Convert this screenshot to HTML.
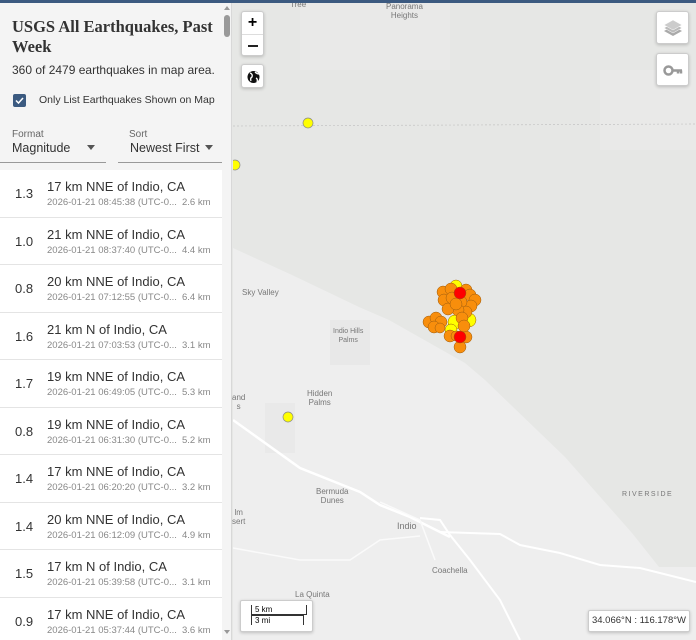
<!DOCTYPE html>
<html><head><style>
*{margin:0;padding:0;box-sizing:border-box}
body{width:696px;height:640px;overflow:hidden;font-family:"Liberation Sans",sans-serif;position:relative;background:#e6e7e5}
#top{position:absolute;left:0;top:0;width:696px;height:3px;background:#3c5a80;z-index:5}
#panel{position:absolute;left:0;top:0;width:232px;height:640px;background:#fff;border-right:1px solid #d8d8d8;overflow:hidden}
#hdr{position:absolute;left:0;top:0;width:222px;height:170px;background:#f4f4f4}
h1{position:absolute;left:12px;top:17px;font-family:"Liberation Serif",serif;font-size:16.5px;line-height:20px;color:#333;font-weight:bold;white-space:nowrap}
.cnt{position:absolute;left:12px;top:63px;font-size:12px;color:#333;white-space:nowrap}
.cb{position:absolute;left:13px;top:94px;width:13px;height:13px;background:#3b5a80;border-radius:2px}
.cbl{position:absolute;left:39px;top:94px;font-size:10.5px;color:#333;white-space:nowrap}
.lab{position:absolute;font-size:10px;color:#666;top:129px}
.sel{position:absolute;top:141px;font-size:12.5px;color:#333;height:22px;border-bottom:1px solid #999;white-space:nowrap}
.arr{position:absolute;top:145px;width:0;height:0;border-left:4px solid transparent;border-right:4px solid transparent;border-top:5px solid #555}
.row{position:absolute;left:0;width:222px;height:47.5px;border-bottom:1px solid #e4e4e4;background:#fff}
.mag{position:absolute;left:15px;top:16px;font-size:13px;color:#333}
.pl{position:absolute;left:47px;top:9px;font-size:13px;color:#333;white-space:nowrap}
.tm{position:absolute;left:47px;top:27px;font-size:9.5px;color:#888;white-space:nowrap}
.km{position:absolute;left:182px;top:27px;font-size:9.5px;color:#888}
#sb{position:absolute;left:222px;top:0;width:10px;height:640px;background:#f4f4f4}
#map{position:absolute;left:233px;top:0;width:463px;height:640px}
.btn{position:absolute;background:#fff;border:1px solid #ccc;border-radius:3px;box-shadow:0 1px 3px rgba(0,0,0,.2)}
.t{position:absolute;font-size:8px;color:#777;text-align:center;line-height:9px}
</style></head><body>
<div id="top"></div>
<svg id="map" width="463" height="640" viewBox="233 0 463 640">
<rect x="233" y="0" width="463" height="640" fill="#e6e7e5"/>
<polygon points="233,248 292,275 359,307 389,320 465,363 485,380 565,457 632,533 659,567 696,567 696,640 233,640" fill="#eeeeee"/>
<rect x="300" y="0" width="150" height="70" fill="#e9e9e8"/>
<rect x="600" y="70" width="96" height="80" fill="#e9e9e8"/>
<rect x="330" y="320" width="40" height="45" fill="#e8e8e8"/>
<rect x="265" y="403" width="30" height="50" fill="#e9e9e9"/>
<line x1="233" y1="126" x2="696" y2="124" stroke="#c4c4c4" stroke-width="0.7" stroke-dasharray="2,2"/>
<polyline points="233,420 300,468 360,492 380,505 410,517 420,522 450,537" fill="none" stroke="#fff" stroke-width="2.5"/>
<polyline points="380,502 420,520 435,560" fill="none" stroke="#fafafa" stroke-width="1.5"/>
<polyline points="420,518 440,520 450,535 470,560 500,600 520,640" fill="none" stroke="#fff" stroke-width="2"/>
<polyline points="440,532 500,534 520,545 560,553 600,565 640,568 696,582" fill="none" stroke="#fff" stroke-width="2"/>
<polyline points="233,548 300,560 350,560 380,540 420,536" fill="none" stroke="#fafafa" stroke-width="1.5"/>
<circle cx="308" cy="123" r="5" fill="#ff0" stroke="#888" stroke-width=".7"/>
<circle cx="235" cy="165" r="5" fill="#ff0" stroke="#888" stroke-width=".7"/>
<circle cx="288" cy="417" r="5" fill="#ff0" stroke="#888" stroke-width=".7"/>
<g stroke="#995a10" stroke-width=".5">
<circle cx="456" cy="286" r="6" fill="#ff0"/><circle cx="469" cy="320" r="7" fill="#ff0"/><circle cx="455" cy="322" r="7" fill="#ff0"/><circle cx="451" cy="330" r="6" fill="#ff0"/>
<circle cx="443" cy="292" r="6" fill="#f88e0c"/><circle cx="444" cy="300" r="6" fill="#f88e0c"/><circle cx="451" cy="289" r="6" fill="#f88e0c"/><circle cx="466" cy="290" r="6" fill="#f88e0c"/><circle cx="470" cy="295" r="6" fill="#f88e0c"/><circle cx="475" cy="300" r="6" fill="#f88e0c"/><circle cx="471" cy="306" r="6" fill="#f88e0c"/><circle cx="452" cy="298" r="6" fill="#f88e0c"/><circle cx="461" cy="302" r="6" fill="#f88e0c"/><circle cx="466" cy="312" r="6" fill="#f88e0c"/><circle cx="458" cy="310" r="6" fill="#f88e0c"/><circle cx="462" cy="318" r="6" fill="#f88e0c"/><circle cx="448" cy="309" r="6" fill="#f88e0c"/><circle cx="456" cy="304" r="6" fill="#f88e0c"/>
<circle cx="429" cy="322" r="6" fill="#f88e0c"/><circle cx="436" cy="318" r="6" fill="#f88e0c"/><circle cx="441" cy="322" r="6" fill="#f88e0c"/><circle cx="434" cy="327" r="6" fill="#f88e0c"/><circle cx="440" cy="328" r="5" fill="#f88e0c"/>
<circle cx="450" cy="336" r="6" fill="#f88e0c"/><circle cx="466" cy="337" r="6" fill="#f88e0c"/><circle cx="460" cy="347" r="6" fill="#f88e0c"/><circle cx="464" cy="326" r="6" fill="#f88e0c"/><circle cx="456" cy="336" r="5" fill="#f88e0c"/>
<circle cx="460" cy="293" r="6" fill="#f00"/><circle cx="460" cy="337" r="6" fill="#f00"/>
</g>
</svg>
<div class="t" style="left:290px;top:0">Tree</div>
<div class="t" style="left:386px;top:2px">Panorama<br>Heights</div>
<div class="t" style="left:242px;top:288px">Sky Valley</div>
<div class="t" style="left:333px;top:327px;font-size:7px">Indio Hills<br>Palms</div>
<div class="t" style="left:307px;top:389px">Hidden<br>Palms</div>
<div class="t" style="left:232px;top:393px">and<br>s</div>
<div class="t" style="left:316px;top:487px">Bermuda<br>Dunes</div>
<div class="t" style="left:232px;top:508px">lm<br>sert</div>
<div class="t" style="left:397px;top:522px;font-size:9px">Indio</div>
<div class="t" style="left:432px;top:566px">Coachella</div>
<div class="t" style="left:295px;top:590px">La Quinta</div>
<div class="t" style="left:622px;top:490px;font-size:7px;letter-spacing:1.5px">RIVERSIDE</div>
<div class="btn" style="left:241px;top:11px;width:23px;height:45px"><div style="position:absolute;top:2px;width:100%;text-align:center;font-size:16px;font-weight:bold">+</div><div style="position:absolute;top:22px;left:0;width:100%;border-top:1px solid #ddd"></div><div style="position:absolute;left:6px;top:33px;width:10px;height:2px;background:#222"></div></div>
<div class="btn" style="left:241px;top:64px;width:23px;height:24px"><svg width="23" height="24"><circle cx="11.5" cy="12" r="6" fill="#111"/><path d="M8 8 q3 1 2 4 q-2 1 -1 4 M13 7 q2 2 4 2 M14 13 q2 1 1 4" stroke="#fff" stroke-width="1.3" fill="none"/></svg></div>
<div class="btn" style="left:656px;top:11px;width:33px;height:33px"><svg width="33" height="33"><path d="M7 19 l9 5 l9 -5 l-9 -5z" fill="#aaa"/><path d="M7 16 l9 5 l9 -5 l-9 -5z" fill="#bbb" stroke="#fff" stroke-width=".5"/><path d="M7 13 l9 5 l9 -5 l-9 -5z" fill="#ccc" stroke="#fff" stroke-width=".5"/></svg></div>
<div class="btn" style="left:656px;top:53px;width:33px;height:33px"><svg width="33" height="33"><circle cx="11.5" cy="16.5" r="4" fill="none" stroke="#999" stroke-width="2.5"/><path d="M15 16.5 h10 M21 16.5 v3 M24 16.5 v3" stroke="#999" stroke-width="2.5"/></svg></div>
<div class="btn" style="left:240px;top:600px;width:73px;height:32px;border-radius:2px"><div style="position:absolute;left:10px;top:4px;width:56px;height:10px;border:1px solid #333;border-top:none;font-size:8px;padding-left:3px;line-height:9px">5 km</div><div style="position:absolute;left:10px;top:14px;width:53px;height:10px;border:1px solid #333;border-bottom:none;font-size:8px;padding-left:3px;line-height:10px">3 mi</div></div>
<div class="btn" style="left:588px;top:610px;width:102px;height:22px;border-radius:2px;font-size:9.5px;color:#333;text-align:center;line-height:20px">34.066°N : 116.178°W</div>

<div id="panel">
<div id="hdr">
<h1>USGS All Earthquakes, Past<br>Week</h1>
<div class="cnt">360 of 2479 earthquakes in map area.</div>
<div class="cb"><svg width="13" height="13"><path d="M3 6.5 l2.5 2.5 l4.5 -5" stroke="#fff" stroke-width="1.5" fill="none"/></svg></div>
<div class="cbl">Only List Earthquakes Shown on Map</div>
<div class="lab" style="left:12px">Format</div><div class="lab" style="left:129px">Sort</div>
<div class="sel" style="left:0;width:106px;padding-left:12px">Magnitude</div><div class="arr" style="left:87px"></div>
<div class="sel" style="left:118px;width:104px;padding-left:12px">Newest First</div><div class="arr" style="left:205px"></div>
</div>
<div class="row" style="top:170px"><div class="mag">1.3</div><div class="pl">17 km NNE of Indio, CA</div><div class="tm">2026-01-21 08:45:38 (UTC-0...</div><div class="km">2.6 km</div></div>
<div class="row" style="top:217.5px"><div class="mag">1.0</div><div class="pl">21 km NNE of Indio, CA</div><div class="tm">2026-01-21 08:37:40 (UTC-0...</div><div class="km">4.4 km</div></div>
<div class="row" style="top:265px"><div class="mag">0.8</div><div class="pl">20 km NNE of Indio, CA</div><div class="tm">2026-01-21 07:12:55 (UTC-0...</div><div class="km">6.4 km</div></div>
<div class="row" style="top:312.5px"><div class="mag">1.6</div><div class="pl">21 km N of Indio, CA</div><div class="tm">2026-01-21 07:03:53 (UTC-0...</div><div class="km">3.1 km</div></div>
<div class="row" style="top:360px"><div class="mag">1.7</div><div class="pl">19 km NNE of Indio, CA</div><div class="tm">2026-01-21 06:49:05 (UTC-0...</div><div class="km">5.3 km</div></div>
<div class="row" style="top:407.5px"><div class="mag">0.8</div><div class="pl">19 km NNE of Indio, CA</div><div class="tm">2026-01-21 06:31:30 (UTC-0...</div><div class="km">5.2 km</div></div>
<div class="row" style="top:455px"><div class="mag">1.4</div><div class="pl">17 km NNE of Indio, CA</div><div class="tm">2026-01-21 06:20:20 (UTC-0...</div><div class="km">3.2 km</div></div>
<div class="row" style="top:502.5px"><div class="mag">1.4</div><div class="pl">20 km NNE of Indio, CA</div><div class="tm">2026-01-21 06:12:09 (UTC-0...</div><div class="km">4.9 km</div></div>
<div class="row" style="top:550px"><div class="mag">1.5</div><div class="pl">17 km N of Indio, CA</div><div class="tm">2026-01-21 05:39:58 (UTC-0...</div><div class="km">3.1 km</div></div>
<div class="row" style="top:597.5px"><div class="mag">0.9</div><div class="pl">17 km NNE of Indio, CA</div><div class="tm">2026-01-21 05:37:44 (UTC-0...</div><div class="km">3.6 km</div></div>
<div id="sb"><div style="position:absolute;left:2px;top:15px;width:6px;height:22px;background:#999;border-radius:3px"></div><div style="position:absolute;left:2px;top:6px;border-left:3px solid transparent;border-right:3px solid transparent;border-bottom:4px solid #999"></div><div style="position:absolute;left:2px;top:630px;border-left:3px solid transparent;border-right:3px solid transparent;border-top:4px solid #999"></div></div>
</div>
</body></html>
